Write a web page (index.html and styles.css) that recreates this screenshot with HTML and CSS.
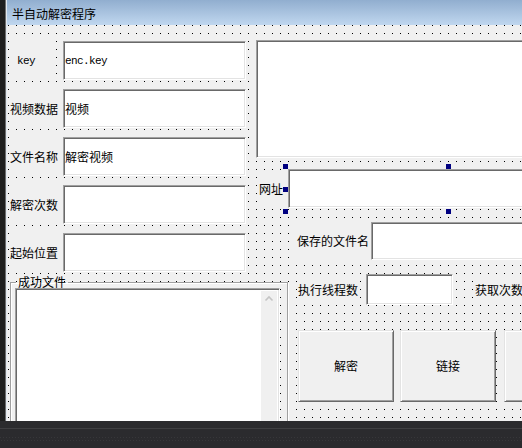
FILE: index.html
```html
<!DOCTYPE html>
<html lang="zh-CN">
<head>
<meta charset="utf-8">
<title>半自动解密程序</title>
<link rel="stylesheet" href="styles.css">
</head>
<body>
<div class="screen">
  <div class="workspace">
    <div class="gutter"></div>
    <div class="window">
      <div class="titlebar"><span class="title">半自动解密程序</span></div>
      <div class="canvas">
        <div class="top">
          <div class="left-col">
            <div class="row"><div class="label label-key">key</div><div class="edit mono">enc.key</div></div>
            <div class="row"><div class="label">视频数据</div><div class="edit">视频</div></div>
            <div class="row"><div class="label">文件名称</div><div class="edit">解密视频</div></div>
            <div class="row"><div class="label">解密次数</div><div class="edit"></div></div>
            <div class="row"><div class="label">起始位置</div><div class="edit"></div></div>
          </div>
          <div class="right-col">
            <div class="edit big"></div>
            <div class="url-row">
              <div class="label url-label">网址</div>
              <div class="edit url-edit">
                <span class="handle h-tl"></span>
                <span class="handle h-tm"></span>
                <span class="handle h-tr"></span>
                <span class="handle h-ml"></span>
                <span class="handle h-mr"></span>
                <span class="handle h-bl"></span>
                <span class="handle h-bm"></span>
                <span class="handle h-br"></span>
              </div>
            </div>
            <div class="save-row"><div class="label save-label">保存的文件名</div><div class="edit save-edit"></div></div>
          </div>
        </div>
        <div class="bottom">
          <fieldset class="group">
            <legend>成功文件</legend>
            <div class="listbox">
              <div class="vscroll">
                <svg class="chev" width="16" height="16" viewBox="0 0 16 16"><polyline points="4.5,9.5 8,6 11.5,9.5" fill="none" stroke="#c4c4c4" stroke-width="1.6"/></svg>
              </div>
            </div>
          </fieldset>
          <div class="actions">
            <div class="thread-row">
              <div class="label thread-label">执行线程数</div>
              <div class="edit thread-edit"></div>
              <div class="label fetch-label">获取次数</div>
            </div>
            <div class="buttons">
              <div class="btn">解密</div>
              <div class="btn">链接</div>
              <div class="btn btn-third"></div>
            </div>
          </div>
        </div>
      </div>
    </div>
  </div>
  <div class="statusbar"></div>
</div>
</body>
</html>
```
FILE: styles.css
```css
* { box-sizing: border-box; }
html, body { margin: 0; padding: 0; }
body {
  width: 522px;
  height: 448px;
  overflow: hidden;
  background: #1e1e1e;
  font-family: "Noto Sans CJK SC", "Noto Sans", sans-serif;
  font-size: 12px;
  color: #000;
}
.screen { display: flex; flex-direction: column; height: 448px; }
.workspace { display: flex; height: 421px; flex: none; overflow: hidden; }
.gutter {
  width: 6px;
  flex: none;
  background: #1e1e1e;
  border-right: 1px solid #6e6e6e;
}
.window {
  flex: 1;
  min-width: 0;
  display: flex;
  flex-direction: column;
  border-left: 1px solid #e0e7ef;
  overflow: hidden;
}
.titlebar {
  height: 25px;
  flex: none;
  background: linear-gradient(#91aecf, #c0d7ef);
  display: flex;
  align-items: center;
  padding: 2px 0 0 5px;
}
.title { font-size: 12px; line-height: 14px; }

.canvas {
  flex: 1;
  display: flex;
  flex-direction: column;
  background-color: #f0f0f0;
  background-image: url("data:image/svg+xml,%3Csvg xmlns='http://www.w3.org/2000/svg' width='8' height='8' shape-rendering='crispEdges'%3E%3Crect width='1' height='1' fill='%23000'/%3E%3C/svg%3E");
  background-size: 8px 8px;
  background-position: 1px 0;
}

.label {
  background: #f0f0f0;
  display: flex;
  align-items: center;
  white-space: nowrap;
  font-size: 12px;
  line-height: 14px;
  flex: none;
}
.edit {
  flex: none;
  background: #fff;
  border: 1px solid;
  border-color: #a0a0a0 #fff #fff #a0a0a0;
  box-shadow: inset 1px 1px 0 #696969, inset -1px -1px 0 #e3e3e3;
  display: flex;
  align-items: center;
  padding-left: 1px;
  white-space: nowrap;
  font-size: 12px;
  line-height: 14px;
}
.mono, .label-key {
  font-family: "Liberation Mono", monospace;
  font-size: 11px;
  letter-spacing: -0.6px;
}

/* top area */
.top { display: flex; height: 249px; flex: none; }
.left-col {
  flex: none;
  width: 237px;
  margin-left: 2px;
  padding-top: 16px;
  display: flex;
  flex-direction: column;
  gap: 9px;
}
.row { display: flex; height: 39px; }
.row .label { width: 52px; padding-left: 1px; }
.row .label-key { width: 47px; padding-left: 8px; }
.row .edit { margin-left: auto; width: 183px; }

.right-col {
  flex: none;
  margin-left: 10px;
  padding-top: 15px;
  display: flex;
  flex-direction: column;
}
.big { width: 300px; height: 118px; }
.url-row { display: flex; margin-top: 11px; height: 39px; }
.url-label { margin-left: 2px; width: 26px; height: 28px; align-self: center; padding-left: 1px; }
.url-edit { margin-left: 4px; width: 320px; position: relative; }
.handle {
  position: absolute;
  width: 5px;
  height: 5px;
  background: #000080;
}
.h-tl { left: -6px; top: -6px; }
.h-tm { left: 157px; top: -6px; }
.h-tr { left: 320px; top: -6px; }
.h-ml { left: -6px; top: 17px; }
.h-mr { left: 320px; top: 17px; }
.h-bl { left: -6px; top: 39px; }
.h-bm { left: 157px; top: 39px; }
.h-br { left: 320px; top: 39px; }

.save-row { display: flex; margin-top: 14px; height: 38px; margin-left: 38px; }
.save-label { width: 75px; padding-left: 3px; }
.save-edit { margin-left: 2px; width: 200px; }

/* bottom area */
.bottom { display: flex; flex: 1; min-height: 0; }
.group {
  flex: none;
  margin: 0 0 0 3px;
  padding: 0;
  width: 278px;
  height: 200px;
  min-width: 0;
  border: 1px solid #a0a0a0;
  box-shadow: inset 1px 1px 0 #fff, 1px 1px 0 #fff;
}
.group legend {
  margin-left: 5px;
  padding: 0 2px;
  line-height: 16px;
  font-size: 12px;
}
.listbox {
  margin: -2px 0 0 4px;
  width: 265px;
  height: 160px;
  background: #fff;
  border: 1px solid;
  border-color: #a0a0a0 #fff #fff #a0a0a0;
  box-shadow: inset 1px 1px 0 #696969, inset -1px -1px 0 #e3e3e3;
  display: flex;
  justify-content: flex-end;
  padding: 2px 2px 0 0;
}
.vscroll { width: 16px; background: #f0f0f0; display: flex; flex-direction: column; }
.chev { display: block; }

.actions { flex: none; margin-left: 10px; display: flex; flex-direction: column; }
.thread-row { display: flex; height: 31px; }
.thread-label { width: 60px; }
.thread-edit { margin-left: 8px; width: 87px; }
.fetch-label { margin-left: 22px; width: 60px; }
.buttons { display: flex; gap: 6px; margin-top: 25px; }
.btn {
  flex: none;
  width: 96px;
  height: 72px;
  background: #f0f0f0;
  border: 1px solid;
  border-color: #e3e3e3 #696969 #696969 #e3e3e3;
  box-shadow: inset 1px 1px 0 #fff, inset -1px -1px 0 #a0a0a0;
  display: flex;
  align-items: center;
  justify-content: center;
  font-size: 12px;
  line-height: 14px;
}
.btn-third { margin-left: 2px; }

.statusbar {
  flex: none;
  height: 27px;
  background:
    repeating-linear-gradient(90deg, #37373a 0 1px, transparent 1px 3px) 0 16px / 100% 1px no-repeat,
    repeating-linear-gradient(90deg, transparent 0 1px, #37373a 1px 2px, transparent 2px 3px) 0 19px / 100% 1px no-repeat,
    linear-gradient(#2b2b2e 0 7px, #3f3f42 7px 8px, #2b2b2e 8px);
}
```
